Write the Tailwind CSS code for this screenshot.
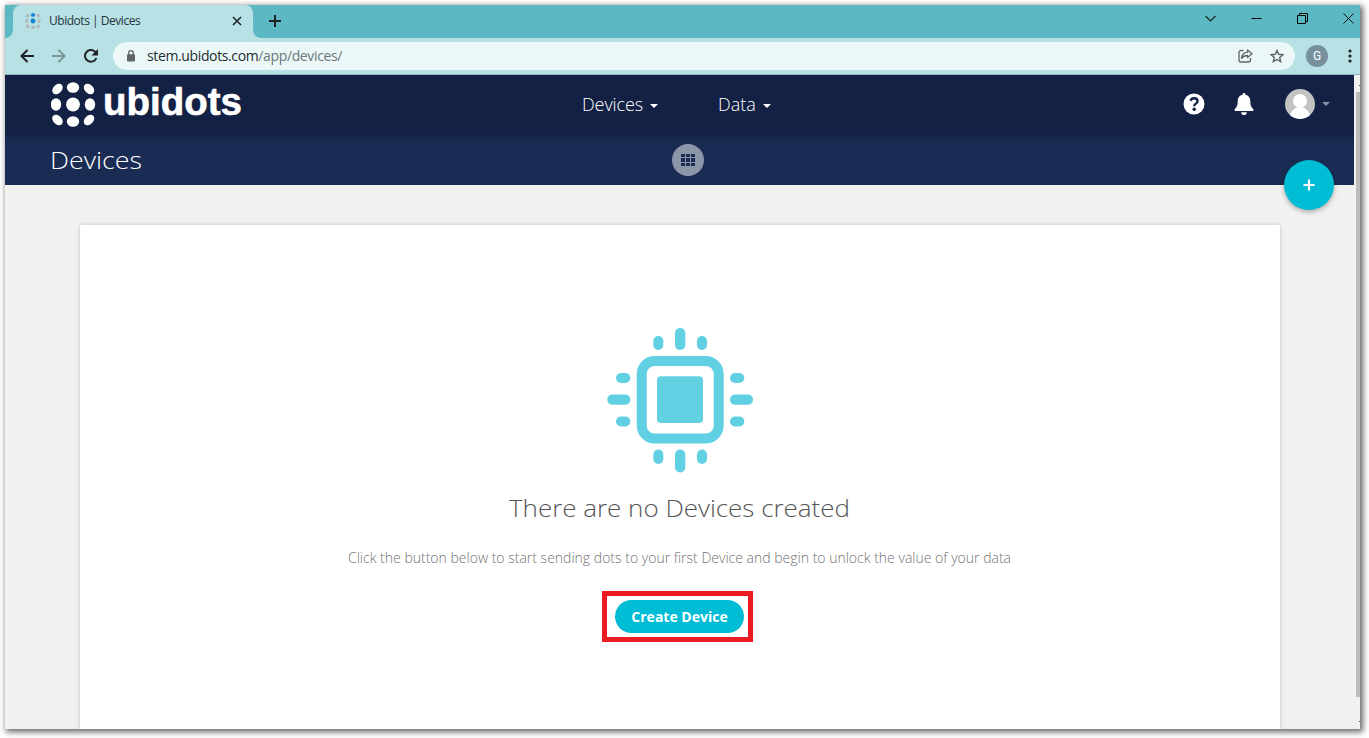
<!DOCTYPE html>
<html lang="en">
<head>
<meta charset="utf-8">
<title>Ubidots | Devices</title>
<script src="https://cdn.jsdelivr.net/npm/@tailwindcss/browser@4"></script>
</head>
<body class="bg-white w-[1369px] h-[738px] overflow-hidden pl-[5px] pt-[5px] font-['Open_Sans',sans-serif]">
<div class="w-[1355px] h-[724px] flex flex-col bg-[#f1f1f1] shadow-[2px_2px_6px_1px_rgba(0,0,0,0.6)]">
  <!-- tab strip -->
  <div class="h-[33px] shrink-0 bg-[#5cb8c2] flex">
    <div class="w-2 bg-[#b7e1e4]"><div class="h-full bg-[#5cb8c2] rounded-br-lg"></div></div>
    <div class="w-[240px] bg-[#b7e1e4] rounded-t-lg flex items-center pl-3 pr-[11px]">
      <svg class="w-4 h-4 -mt-px" viewBox="0 0 16 16"><g fill="#b3b8bc"><ellipse cx="2.7" cy="2.7" rx="2" ry="1.6" transform="rotate(-45 2.7 2.7)"/><ellipse cx="13.3" cy="2.7" rx="2" ry="1.6" transform="rotate(45 13.3 2.7)"/><ellipse cx="1.8" cy="8" rx="1.6" ry="2"/><ellipse cx="14.2" cy="8" rx="1.6" ry="2"/><ellipse cx="2.7" cy="13.3" rx="2" ry="1.6" transform="rotate(45 2.7 13.3)"/><ellipse cx="13.3" cy="13.3" rx="2" ry="1.6" transform="rotate(-45 13.3 13.3)"/><ellipse cx="8" cy="14.2" rx="2" ry="1.7"/></g><g fill="#1583d3"><ellipse cx="8" cy="1.9" rx="2.1" ry="1.9"/><circle cx="8" cy="8" r="2.4"/></g></svg>
      <span class="ml-2 -mt-[2px] text-[12px] leading-4 tracking-[-0.47px] text-[#26343a] whitespace-nowrap">Ubidots | Devices</span>
      <svg class="ml-auto -mt-px w-[10px] h-[10px]" viewBox="0 0 10 10" stroke="#202124" stroke-width="1.6"><path d="M1 1l8 8M9 1L1 9"/></svg>
    </div>
    <div class="w-2 bg-[#b7e1e4]"><div class="h-full bg-[#5cb8c2] rounded-bl-lg"></div></div>
    <div class="flex items-center pl-[8px] pb-px"><svg class="w-3 h-3" viewBox="0 0 12 12" stroke="#202124" stroke-width="2"><path d="M6 0v12M0 6h12"/></svg></div>
    <div class="ml-auto flex h-[26px] items-center pr-[6px] gap-[35px]" >
      <svg class="w-[11px] h-[11px]" viewBox="0 0 11 11" fill="none" stroke="#182326" stroke-width="1.1"><path d="M.5 3l5 5 5-5"/></svg>
      <svg class="w-[11px] h-[11px]" viewBox="0 0 11 11" stroke="#000"><path d="M.5 5.500h10"/></svg>
      <svg class="w-[11px] h-[11px]" viewBox="0 0 11 11" fill="none" stroke="#000"><path d="M.5 2.500h8v8h-8zM2.500 2.500v-2h8v8h-2"/></svg>
      <svg class="w-[11px] h-[11px]" viewBox="0 0 11 11" stroke="#111"><path d="M.5.5l10 10M10.500.5l-10 10"/></svg>
    </div>
  </div>
  <!-- toolbar -->
  <div class="h-[37px] shrink-0 bg-[#b7e1e4] border-b border-[#8cb4b7] flex items-center pl-[15px]">
    <svg class="w-[14px] h-[14px]" viewBox="0 0 14 14" fill="none" stroke="#202124" stroke-width="2"><path d="M14 7H1.500M7.500 1L1.500 7l6 6"/></svg>
    <svg class="ml-[18px] w-[14px] h-[14px]" viewBox="0 0 14 14" fill="none" stroke="#7c9599" stroke-width="2"><path d="M0 7h12.500M6.500 1l6 6-6 6"/></svg>
    <svg class="ml-[18px] w-[14px] h-[14px]" viewBox="0 0 14 14"><path d="M12.400 9A5.900 5.900 0 1 1 11.100 2.700L12 3.800" fill="none" stroke="#202124" stroke-width="2"/><path d="M14 0v6.500H7.500z" fill="#202124"/></svg>
    <div class="ml-[15px] h-7 w-[1182px] rounded-full bg-[#ecf8f8] flex items-center pl-[14px] pr-[11px]">
      <svg class="w-[8px] h-[12px]" viewBox="0 0 8 12"><path d="M1.700 5V3a2.300 2.300 0 0 1 4.600 0v2" fill="none" stroke="#5f6368" stroke-width="1.300"/><rect y="4.200" width="8" height="7.300" rx="1" fill="#5f6368"/></svg>
      <span class="ml-[12px] text-[14px] leading-5 tracking-[-0.37px] whitespace-nowrap text-[#6b7678]"><span class="text-[#202c30]">stem.ubidots.com</span>/app/devices/</span>
      <svg class="ml-auto w-[15px] h-[14px]" viewBox="0 0 15 14" fill="none" stroke="#5f6368" stroke-width="1.300" stroke-linejoin="round"><path d="M5.500 1.500H3A2 2 0 0 0 1 3.500v7.500a2 2 0 0 0 2 2h7.500a2 2 0 0 0 2-2V9"/><path d="M9.500 1l4.500 3.800-4.500 3.800V6.500c-3 0-4.600.8-6 3 .3-3.200 2-5.800 6-6.300z"/></svg>
      <svg class="ml-[17px] w-[14px] h-[14px]" viewBox="0 0 14 14" fill="none" stroke="#5f6368" stroke-width="1.400"><path d="M7 1.500l1.700 3.800 4.200.4-3.200 2.800.95 4.100L7 10.450 3.350 12.600l.95-4.100L1.100 5.700l4.200-.4z"/></svg>
    </div>
    <div class="ml-[11px] w-[22px] h-[22px] rounded-full bg-[#78909c] text-white text-[12px] leading-[22px] text-center font-['Roboto',sans-serif]">G</div>
    <svg class="ml-[20px] w-[4px] h-[14px]" viewBox="0 0 4 14" fill="#202124"><circle cx="2" cy="2" r="1.600"/><circle cx="2" cy="7" r="1.600"/><circle cx="2" cy="12" r="1.600"/></svg>
  </div>
  <!-- page -->
  <div class="flex-1 min-h-0 flex">
    <div class="w-[1349px] flex flex-col overflow-hidden">
      <div class="h-[60px] shrink-0 bg-[#132144] flex items-center text-white pl-[46px] pb-[2px]">
        <svg class="w-[192px] h-[46px]" viewBox="0 0 192 46" fill="#fff"><ellipse cx="6.500" cy="8" rx="6" ry="4.300" transform="rotate(-45 6.500 8)"/><ellipse cx="38" cy="8" rx="6" ry="4.300" transform="rotate(45 38 8)"/><ellipse cx="22" cy="6.500" rx="6.200" ry="5.200"/><ellipse cx="5" cy="23.500" rx="5.200" ry="6.200"/><circle cx="22" cy="23.500" r="6.900"/><ellipse cx="39" cy="23.500" rx="5.200" ry="6.200"/><ellipse cx="6.500" cy="39" rx="6" ry="4.300" transform="rotate(45 6.500 39)"/><ellipse cx="38" cy="39" rx="6" ry="4.300" transform="rotate(-45 38 39)"/><ellipse cx="22" cy="40.500" rx="6.200" ry="5.200"/>
          <text x="52" y="34" font-family="Liberation Sans" font-weight="700" font-size="38" stroke="#fff" stroke-width=".6" stroke-linejoin="round" textLength="139" lengthAdjust="spacingAndGlyphs">ubidots</text></svg>
        <span class="ml-[339px] w-[61px] text-[18px] leading-6 font-light tracking-[-0.1px]">Devices</span>
        <i class="ml-[7px] mt-[3px] border-x-4 border-t-4 border-x-transparent border-t-white"></i>
        <span class="ml-[60px] w-[38px] text-[18px] leading-6 font-light">Data</span>
        <i class="ml-[7px] mt-[3px] border-x-4 border-t-4 border-x-transparent border-t-white"></i>
        <svg class="ml-auto w-[22px] h-[22px]" viewBox="0 0 22 22"><circle cx="11" cy="11" r="10.500" fill="#fff"/><path d="M7.500 7.800C8.300 5.800 9.500 5.300 11 5.300c2 0 3.500 1.200 3.500 2.900 0 2.600-3.300 2.300-3.300 5" fill="none" stroke="#132144" stroke-width="2.400"/><circle cx="11.200" cy="16.300" r="1.700" fill="#132144"/></svg>
        <svg class="ml-[29px] w-[20px] h-[22px]" viewBox="0 0 20 22" fill="#fff"><path d="M10 0c.9 0 1.400.6 1.400 1.700 3.300.7 4.900 3 4.900 6.300 0 4.600 1 6.200 2.900 7.900.7.800.3 2.100-.8 2.100H1.600C.5 18 .1 16.700.8 15.900 2.700 14.200 3.700 12.600 3.700 8c0-3.300 1.600-5.600 4.900-6.300C8.600.6 9.100 0 10 0zM7.200 19.200h5.600a2.800 2.800 0 0 1-5.600 0z"/></svg>
        <svg class="ml-[31px] w-[30px] h-[30px]" viewBox="0 0 30 30"><defs><clipPath id="av"><circle cx="15" cy="15" r="15"/></clipPath></defs><g clip-path="url(#av)"><rect width="30" height="30" fill="#c2c2c2"/><circle cx="15" cy="12" r="7" fill="#fff"/><path d="M4 30c1-7 5-12 11-12s10 5 11 12z" fill="#fff"/></g></svg>
        <i class="ml-[7px] mr-[24px] border-x-4 border-t-4 border-x-transparent border-t-[#8a91a3]"></i>
      </div>
      <div class="h-[50px] shrink-0 bg-[#1a2c54] bg-linear-to-b from-[#15254a] to-[#1a2c54] to-[8px] flex items-center text-white pl-[46px]">
        <svg class="w-[92px] h-[34px]" viewBox="0 0 92 34"><text x="-1" y="26" fill="#fff" font-family="Open Sans" font-weight="300" font-size="24" textLength="92" lengthAdjust="spacingAndGlyphs">Devices</text></svg>
        <div class="ml-[529px] w-8 h-8 rounded-full bg-[#8c95a9] flex items-center justify-center">
          <div class="grid grid-cols-3 gap-px">
            <i class="w-1 h-[3.500px] bg-[#1a2c54]"></i><i class="w-1 h-[3.500px] bg-[#1a2c54]"></i><i class="w-1 h-[3.500px] bg-[#1a2c54]"></i><i class="w-1 h-[3.500px] bg-[#1a2c54]"></i><i class="w-1 h-[3.500px] bg-[#1a2c54]"></i><i class="w-1 h-[3.500px] bg-[#1a2c54]"></i><i class="w-1 h-[3.500px] bg-[#1a2c54]"></i><i class="w-1 h-[3.500px] bg-[#1a2c54]"></i><i class="w-1 h-[3.500px] bg-[#1a2c54]"></i>
          </div>
        </div>
      </div>
      <div class="mt-10 ml-[75px] w-[1200px] flex-1 bg-white shadow-[0_0_4px_rgba(0,0,0,0.2)] flex flex-col items-center">
        <svg class="mt-[95px] w-[160px] h-[160px] shrink-0" viewBox="0 0 160 160" fill="#62d0e3">
          <rect x="41.700" y="41" width="77" height="77.500" rx="13" fill="none" stroke="#62d0e3" stroke-width="10"/>
          <rect x="57" y="56.300" width="46" height="46.700" rx="4"/>
          <rect x="53.300" y="16" width="10" height="14" rx="5"/><rect x="75" y="8" width="10.300" height="22" rx="5"/><rect x="97" y="16" width="10" height="14" rx="5"/>
          <rect x="53.300" y="129.500" width="10" height="14.500" rx="5"/><rect x="75" y="129.500" width="10.300" height="23" rx="5"/><rect x="97" y="129.500" width="10" height="14.500" rx="5"/>
          <rect x="16" y="53" width="14.300" height="10" rx="5"/><rect x="7.300" y="74.500" width="23" height="10.300" rx="5"/><rect x="16" y="96.500" width="14.300" height="10" rx="5"/>
          <rect x="130" y="53" width="14.300" height="10" rx="5"/><rect x="130" y="74.500" width="23" height="10.300" rx="5"/><rect x="130" y="96.500" width="14.300" height="10" rx="5"/>
        </svg>
        <svg class="mt-[9px] w-[344px] h-[40px] shrink-0" viewBox="0 0 344 40"><text x="1" y="28" fill="#555" font-family="Open Sans" font-weight="300" font-size="24" textLength="341" lengthAdjust="spacingAndGlyphs">There are no Devices created</text></svg>
        <svg class="mt-[16px] w-[664px] h-[26px] shrink-0" viewBox="0 0 664 26"><text x="0" y="18" fill="#737373" font-family="Open Sans" font-weight="300" font-size="14" textLength="663">Click the button below to start sending dots to your first Device and begin to unlock the value of your data</text></svg>
        <div class="mt-[20px] mr-[5px] w-[151px] h-[51px] shrink-0 border-[5px] border-[#ed1c24] pl-2 pt-1">
          <button class="block w-[129px] h-[33px] rounded-full bg-[#00bcd4] text-white text-[14px] font-bold leading-[33px] whitespace-nowrap">Create Device</button>
        </div>
      </div>
    </div>
    <div class="w-[6px] bg-[#f1f1f1] pl-[2px] pt-[10px] flex flex-col items-end"><i class="w-px h-px bg-[#505050]"></i><div class="mt-[6px] w-full h-[605px] bg-[#bcbcbc]"></div><i class="mt-[24px] w-px h-px bg-[#505050]"></i></div>
  </div>
</div>
<button class="absolute left-[1284px] top-[160px] w-[50px] h-[50px] rounded-full bg-[#00bcd4] shadow-[0_2px_5px_rgba(0,0,0,0.3)] flex items-center justify-center"><svg class="w-3 h-3" viewBox="0 0 12 12" stroke="#fff" stroke-width="2.200"><path d="M6 .5v11M.5 6h11"/></svg></button>
</body>
</html>
